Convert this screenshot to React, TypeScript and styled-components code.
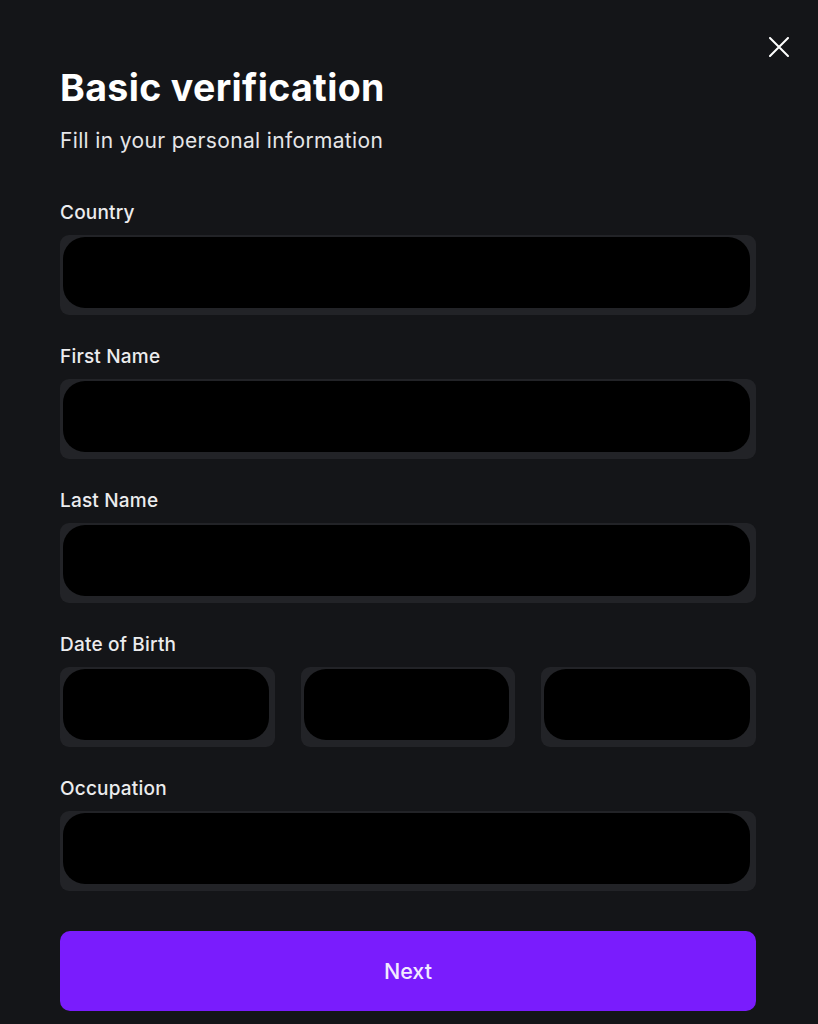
import * as React from 'react';
import styled, { createGlobalStyle } from 'styled-components';

const GlobalStyle = createGlobalStyle`
  html, body {
    margin: 0;
    padding: 0;
    background: #141518;
  }
  body {
    font-family: Inter, "Noto Sans", sans-serif;
    color: #f4f4f5;
  }
`;

const Modal = styled.div`
  position: relative;
  box-sizing: border-box;
  width: 818px;
  min-height: 1024px;
  padding: 66px 62px 0 60px;
  background: #141518;
`;

const CloseButton = styled.button`
  position: absolute;
  top: 35px;
  right: 27px;
  width: 24px;
  height: 24px;
  padding: 0;
  border: none;
  background: none;
  cursor: pointer;
  display: flex;
  align-items: center;
  justify-content: center;
`;

const Title = styled.h1`
  margin: 0;
  font-size: 37.5px;
  line-height: 44px;
  font-weight: 700;
  letter-spacing: 0.35px;
  color: #ffffff;
`;

const Subtitle = styled.p`
  margin: 17px 0 0;
  font-size: 21px;
  line-height: 28px;
  font-weight: 400;
  letter-spacing: 0.35px;
  color: #e6e6e8;
`;

const Form = styled.form`
  display: flex;
  flex-direction: column;
  gap: 30px;
  margin-top: 46px;
`;

const Field = styled.div`
  display: flex;
  flex-direction: column;
  gap: 10px;
`;

const Label = styled.label`
  font-size: 19px;
  line-height: 24px;
  font-weight: 500;
  letter-spacing: 0.2px;
  color: #ececee;
`;

const InputShell = styled.div`
  box-sizing: border-box;
  height: 80px;
  padding: 2px 6px 7px 3px;
  border-radius: 9px;
  background: #222327;
`;

const Input = styled.input`
  box-sizing: border-box;
  display: block;
  width: 100%;
  height: 100%;
  border: none;
  outline: none;
  border-radius: 22px;
  background: #000000;
  color: #ffffff;
  font: inherit;
  font-size: 18px;
  padding: 0 20px;
`;

const DateRow = styled.div`
  display: grid;
  grid-template-columns: repeat(3, 1fr);
  gap: 26px;
`;

const NextButton = styled.button`
  margin-top: 10px;
  height: 80px;
  border: none;
  border-radius: 10px;
  background: #7a1cfd;
  color: #f3eaff;
  font-family: Inter, "Noto Sans", sans-serif;
  font-size: 21.5px;
  font-weight: 500;
  cursor: pointer;
`;

function TextField({ label }: { label: string }) {
    return (
        <Field>
            <Label>{label}</Label>
            <InputShell>
                <Input type="text" />
            </InputShell>
        </Field>
    );
}

function App() {
    return (
        <Modal>
            <GlobalStyle />
            <CloseButton aria-label="Close">
                <svg width="20" height="20" viewBox="0 0 20 20" fill="none">
                    <path d="M1 1L19 19M19 1L1 19" stroke="#ffffff" strokeWidth="2" strokeLinecap="round" />
                </svg>
            </CloseButton>
            <Title>Basic verification</Title>
            <Subtitle>Fill in your personal information</Subtitle>
            <Form onSubmit={(e) => e.preventDefault()}>
                <TextField label="Country" />
                <TextField label="First Name" />
                <TextField label="Last Name" />
                <Field>
                    <Label>Date of Birth</Label>
                    <DateRow>
                        <InputShell><Input type="text" /></InputShell>
                        <InputShell><Input type="text" /></InputShell>
                        <InputShell><Input type="text" /></InputShell>
                    </DateRow>
                </Field>
                <TextField label="Occupation" />
                <NextButton type="submit">Next</NextButton>
            </Form>
        </Modal>
    );
}

export default App;
